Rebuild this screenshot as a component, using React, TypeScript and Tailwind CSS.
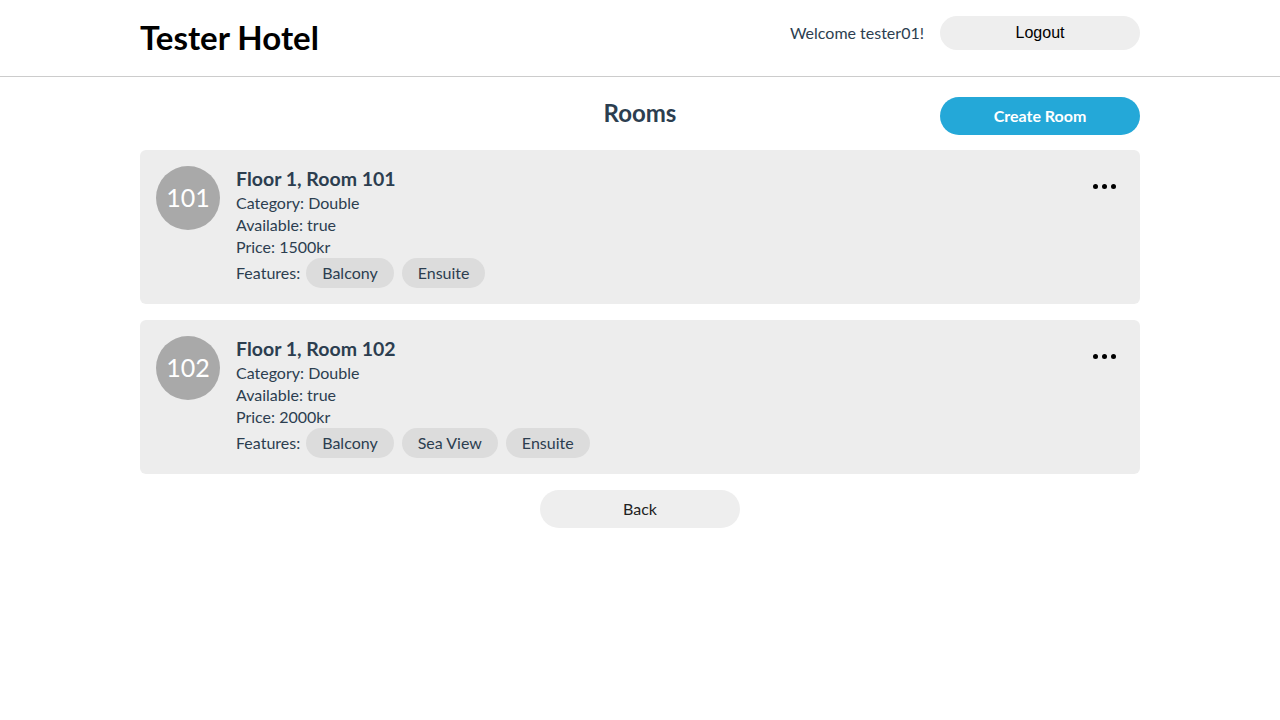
import React from "react";

type Room = {
  number: number;
  floor: number;
  category: string;
  available: boolean;
  price: number;
  features: string[];
};

const rooms: Room[] = [
  { number: 101, floor: 1, category: "Double", available: true, price: 1500, features: ["Balcony", "Ensuite"] },
  { number: 102, floor: 1, category: "Double", available: true, price: 2000, features: ["Balcony", "Sea View", "Ensuite"] },
];

function RoomCard({ room }: { room: Room }) {
  return (
    <div className="relative flex gap-4 rounded-md bg-[#ededed] p-4">
      <div className="flex h-16 w-16 shrink-0 items-center justify-center rounded-full bg-[#a9a9a9] text-[25px] font-normal text-white">
        {room.number}
      </div>
      <div className="flex flex-col text-[16px] leading-[22px] text-[#2c3e50]">
        <div className="text-[19.5px] font-bold leading-[26px]">
          Floor {room.floor}, Room {room.number}
        </div>
        <div>Category: {room.category}</div>
        <div>Available: {String(room.available)}</div>
        <div>Price: {room.price}kr</div>
        <div className="flex items-center gap-2">
          <span className="-mr-[2px]">Features:</span>
          {room.features.map((f) => (
            <span key={f} className="rounded-full bg-[#dcdcdc] px-4 leading-[30px]">
              {f}
            </span>
          ))}
        </div>
      </div>
      {/* options */}
      <button className="absolute right-[24px] top-[34px] flex gap-[4px]">
        <span className="h-[5px] w-[5px] rounded-full bg-black" />
        <span className="h-[5px] w-[5px] rounded-full bg-black" />
        <span className="h-[5px] w-[5px] rounded-full bg-black" />
      </button>
    </div>
  );
}

export default function App() {
  return (
    <div className="min-h-screen bg-white font-['Lato',sans-serif]">
      {/* Header */}
      <header className="h-[77px] border-b border-[#cccccc]">
        <div className="mx-auto flex w-[1000px] items-start justify-between">
          <h1 className="mt-[17px] text-[33px] font-bold leading-[40px] text-black">Tester Hotel</h1>
          <div className="mt-4 flex items-center gap-4">
            <span className="text-[16px] text-[#2c3e50]">Welcome tester01!</span>
            <button className="h-[34px] w-[200px] rounded-full bg-[#eeeeee] font-['Liberation_Sans',sans-serif] text-[16px] text-black">
              Logout
            </button>
          </div>
        </div>
      </header>

      <main className="mx-auto w-[1000px]">
        <div className="relative mt-5 flex h-[38px] items-start justify-center">
          <h2 className="text-[24px] font-bold leading-[32px] text-[#2c3e50]">Rooms</h2>
          <button className="absolute right-0 top-0 h-[38px] w-[200px] rounded-full bg-[#24a8d8] text-[16px] font-bold text-white">
            Create Room
          </button>
        </div>

        <div className="mt-[15px] flex flex-col gap-4">
          {rooms.map((r) => (
            <RoomCard key={r.number} room={r} />
          ))}
        </div>

        <div className="mt-4 flex justify-center">
          <button className="h-[38px] w-[200px] rounded-full bg-[#eeeeee] text-[16px] text-[#222]">Back</button>
        </div>
      </main>
    </div>
  );
}
